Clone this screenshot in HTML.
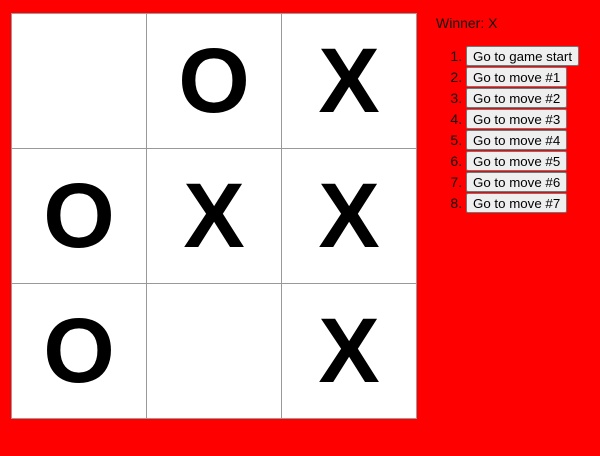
<!DOCTYPE html>
<html><head><style>
html,body{margin:0;padding:0;background:#f00;width:600px;height:456px;overflow:hidden;font-family:"Liberation Sans",sans-serif}
.board{position:absolute;left:11px;top:13px;width:405px;height:405px;background:#fff;border-left:1px solid #999;border-top:1px solid #999}
.c{position:absolute;width:134px;height:134px;border-right:1px solid #999;border-bottom:1px solid #999;font-weight:bold;font-size:92px;line-height:134px;text-align:center;color:#000}
.info{position:absolute;left:436px;top:15px;font-size:14px;color:#111}
ol{position:absolute;left:426px;top:46px;margin:0;padding-left:40px;font-size:14px;color:#111}
li{height:21px;line-height:20px}
button{font-family:"Liberation Sans",sans-serif;font-size:13.3px;height:20px;padding:0 6px;background:#efefef;border:1px solid #767676;border-radius:2px;color:#000;vertical-align:top;margin:0}
</style></head><body>
<div class="board">
<div class="c" style="left:0;top:0"></div>
<div class="c" style="left:135px;top:0">O</div>
<div class="c" style="left:270px;top:0">X</div>
<div class="c" style="left:0;top:135px">O</div>
<div class="c" style="left:135px;top:135px">X</div>
<div class="c" style="left:270px;top:135px">X</div>
<div class="c" style="left:0;top:270px">O</div>
<div class="c" style="left:135px;top:270px"></div>
<div class="c" style="left:270px;top:270px">X</div>
</div>
<div class="info">Winner: X</div>
<ol>
<li><button>Go to game start</button></li>
<li><button>Go to move #1</button></li>
<li><button>Go to move #2</button></li>
<li><button>Go to move #3</button></li>
<li><button>Go to move #4</button></li>
<li><button>Go to move #5</button></li>
<li><button>Go to move #6</button></li>
<li><button>Go to move #7</button></li>
</ol>
</body></html>
